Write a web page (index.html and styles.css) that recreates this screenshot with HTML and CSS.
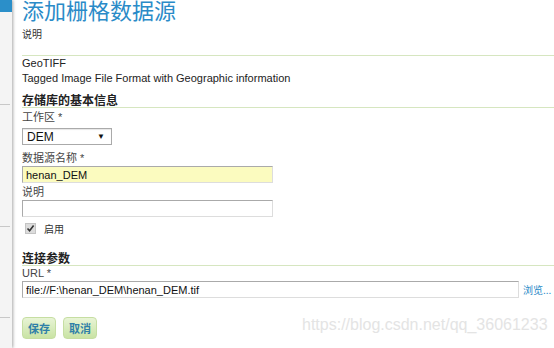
FILE: index.html
```html
<!DOCTYPE html>
<html lang="zh-CN">

<head>
    <meta charset="UTF-8">
    <title>添加栅格数据源</title>
    <link rel="stylesheet" href="styles.css">
</head>

<body>
    <div class="page">
        <div class="sidebar">
            <div class="sidebar-top"></div>
            <div class="sidebar-rule r1"></div>
            <div class="sidebar-rule r2"></div>
            <div class="sidebar-rule r3"></div>
        </div>
        <div class="main">
            <h1 class="title">添加栅格数据源</h1>
            <div class="desc">说明</div>

            <div class="store-type">
                <div>GeoTIFF</div>
                <div>Tagged Image File Format with Geographic information</div>
            </div>

            <h2 class="section">存储库的基本信息</h2>
            <label class="label">工作区 *</label>
            <div class="select">
                <span>DEM</span>
                <span class="arrow">&#9660;</span>
            </div>

            <label class="label name-label">数据源名称 *</label>
            <input class="field name" type="text" value="henan_DEM">
            <label class="label desc-label">说明</label>
            <input class="field" type="text" value="">

            <div class="check-row">
                <span class="checkbox">
                    <svg width="9" height="9" viewBox="0 0 9 9"><path d="M1.5 4.5 L3.6 6.8 L7.6 1.6" fill="none" stroke="#333" stroke-width="1.6"/></svg>
                </span>
                <span>启用</span>
            </div>

            <h2 class="section conn">连接参数</h2>
            <label class="label url-label">URL *</label>
            <div class="url-row">
                <input class="field url" type="text" value="file://F:\henan_DEM\henan_DEM.tif">
                <a class="browse" href="#">浏览...</a>
            </div>

            <div class="buttons">
                <a class="btn" href="#">保存</a>
                <a class="btn" href="#">取消</a>
                <span class="watermark">https://blog.csdn.net/qq_36061233</span>
            </div>
        </div>
    </div>
</body>

</html>
```

FILE: styles.css
```css
body {
    margin: 0;
    padding: 0;
    background-color: #ffffff;
    font-family: "Liberation Sans", Arial, "Noto Sans CJK SC", sans-serif;
    font-size: 11px;
    color: #333333;
    overflow: hidden;
}

.page {
    display: flex;
    height: 348px;
}

.sidebar {
    position: relative;
    width: 12px;
    background-color: #f4f4f4;
    box-shadow: 1px 0 3px rgba(0, 0, 0, 0.35);
    flex-shrink: 0;
}

.sidebar-top {
    height: 12px;
    background-color: #2b8fc9;
}

.sidebar-rule {
    position: absolute;
    left: 0;
    width: 10px;
    height: 1px;
    background-color: #c8c8c8;
}

.r1 { top: 104px; }
.r2 { top: 226px; }
.r3 { top: 317px; }

.main {
    flex: 1;
    padding-left: 10px;
    display: flex;
    flex-direction: column;
    align-items: flex-start;
}

.title {
    margin: -5px 0 0 0;
    font-size: 22px;
    font-weight: normal;
    line-height: 28px;
    color: #2a8bc8;
    font-family: "Noto Sans CJK SC", sans-serif;
}

.desc {
    margin-top: 4px;
    line-height: 14px;
    font-family: "Noto Sans CJK SC", sans-serif;
    font-size: 10px;
}

.store-type {
    align-self: stretch;
    margin-top: 14px;
    padding-top: 0;
    border-top: 1px solid #d6e6c0;
    line-height: 15px;
    font-size: 11px;
    color: #222222;
}

.section {
    align-self: stretch;
    margin: 6px 0 0 0;
    font-size: 12px;
    font-weight: bold;
    line-height: 15px;
    color: #222222;
    border-bottom: 1px solid #d6e6c0;
    font-family: "Noto Sans CJK SC", sans-serif;
}

.label {
    line-height: 14px;
    margin-top: 2px;
    font-size: 11px;
    color: #444444;
}

.select {
    margin-top: 4px;
    width: 78px;
    height: 15px;
    padding: 0 6px 0 4px;
    border: 1px solid #aaaaaa;
    display: flex;
    justify-content: space-between;
    align-items: center;
    font-size: 12px;
    color: #111111;
    box-shadow: inset 0 1px 1px rgba(0, 0, 0, 0.1);
}

.arrow {
    font-size: 8px;
}

.name-label {
    margin-top: 6px;
}

.desc-label {
    margin-top: 2px;
}

.url-label {
    margin-top: 0;
}

.field {
    margin: 1px 0 0 0;
    width: 251px;
    height: 17px;
    box-sizing: border-box;
    padding: 0 3px;
    border: 1px solid #aaaaaa;
    border-right-color: #dddddd;
    border-bottom-color: #dddddd;
    font-family: "Liberation Sans", Arial, sans-serif;
    font-size: 11px;
    color: #111111;
    background-color: #ffffff;
}

.name {
    background-color: #fbfbbf;
}

.check-row {
    margin-top: 4px;
    display: flex;
    align-items: center;
    gap: 8px;
    padding-left: 3px;
    font-family: "Noto Sans CJK SC", sans-serif;
    font-size: 10px;
}

.checkbox {
    width: 9px;
    height: 9px;
    background-color: #dcdcdc;
    border: 1px solid #c4c4c4;
    display: flex;
    align-items: center;
    justify-content: center;
}

.conn {
    margin-top: 14px;
}

.url-row {
    display: flex;
    align-items: center;
    gap: 4px;
}

.url {
    width: 497px;
}

.browse {
    color: #2a8bc8;
    text-decoration: none;
    font-size: 10px;
    font-family: "Noto Sans CJK SC", sans-serif;
}

.buttons {
    margin-top: 19px;
    display: flex;
    align-items: center;
    gap: 7px;
    position: relative;
    align-self: stretch;
}

.btn {
    width: 34px;
    height: 22px;
    box-sizing: border-box;
    display: flex;
    align-items: center;
    justify-content: center;
    border: 1px solid #c6dea2;
    border-radius: 4px;
    background: linear-gradient(#e8f4d6, #c9e3a4);
    color: #2f7fa8;
    font-weight: bold;
    font-size: 11px;
    text-decoration: none;
    font-family: "Noto Sans CJK SC", sans-serif;
}

.watermark {
    position: absolute;
    left: 280px;
    top: -1px;
    font-size: 16px;
    color: #e4e4e4;
    font-family: "Liberation Sans", Arial, sans-serif;
}
```
